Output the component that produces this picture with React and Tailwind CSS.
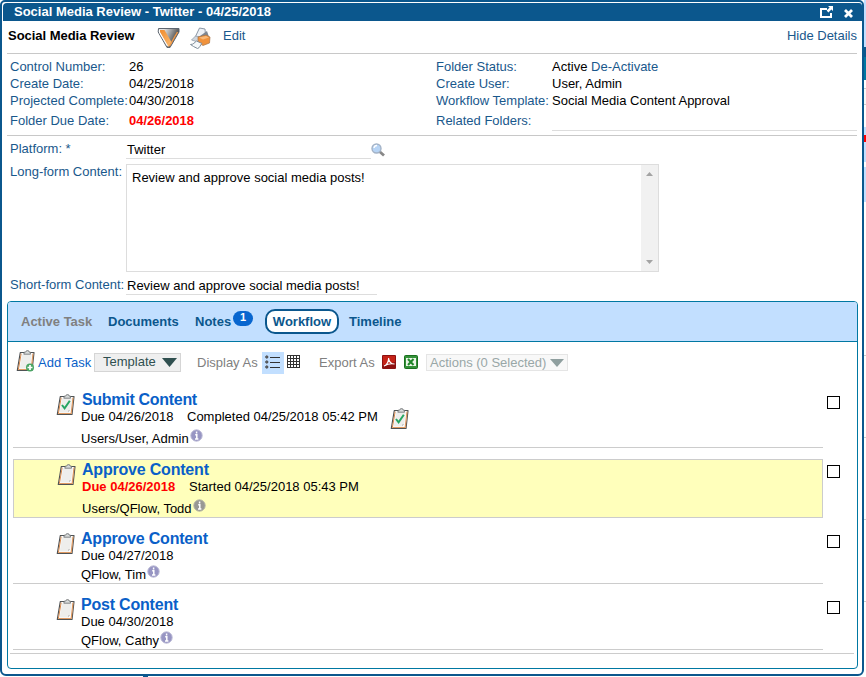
import React from 'react';

const Clipboard = ({ kind, className = '' }) => (
  <svg className={`block shrink-0 ${className}`} width="20" height="22" viewBox="0 0 20 22">
    <path d="M4.300 2.500H18L16 20.500H1.300z" fill="#fff" stroke="#4f5355" strokeWidth="1.200" strokeLinejoin="round" />
    <path d="M5.200 3.600L2.400 19.400" stroke="#d98b4e" strokeWidth="1" />
    <path d="M17 3.600L15.200 19.500H2.200" fill="none" stroke="#e09a62" strokeWidth="1.200" />
    <path d="M6 4.200h9.800l-1.600 12-2.200 2.300H3.700z" fill="#eeeeec" />
    <path d="M14.200 16.200l-2.200 2.300.3-2.300z" fill="#bbb" />
    <path d="M7.800 4.200l.6-2.200h1.500l.6-1.300h2L13 2h1.300l.2 2.200z" fill="#d9dcdc" stroke="#6b6f70" strokeWidth=".8" />
    {kind === 'check' && <path d="M6 11l2.600 3.300 5.200-7.500" fill="none" stroke="#26a562" strokeWidth="2" />}
    {kind === 'add' && (
      <g>
        <circle cx="14" cy="17.500" r="4" fill="#4aa564" />
        <path d="M14 15v5M11.500 17.500h5" stroke="#fff" strokeWidth="1.700" />
      </g>
    )}
  </svg>
);

const Info = ({ gray }) => (
  <svg className="block shrink-0" width="13" height="13" viewBox="0 0 13 13">
    <circle cx="6.500" cy="6.500" r="5.700" fill={gray ? '#989894' : '#9795c3'} stroke={gray ? '#b5b5a5' : '#bcbbd6'} />
    <path d="M6.600 2.500v2M5.200 5.800h1.600v4M5 10h3.400" fill="none" stroke="#fff" strokeWidth="1.500" />
  </svg>
);

const Title = ({ children, className = 'tracking-[-0.2px]' }) => (
  <div className={`h-[17px] text-[16px] leading-[18px] font-bold text-[#0a5fc8] ${className}`}>{children}</div>
);

const Check = () => <div className="size-[13px] shrink-0 border border-black bg-white" />;

const Label = ({ children, className = '' }) => <div className={`shrink-0 text-[#19588c] ${className}`}>{children}</div>;

export default function App() {
  return (
    <div className="flex h-[677px] w-[866px] overflow-hidden bg-white font-['Liberation_Sans',Arial,sans-serif] text-[13px] leading-[17px] whitespace-nowrap text-black">
      <div className="flex w-[864px] shrink-0 flex-col">
        <div className="flex h-[676px] flex-col overflow-hidden rounded-t-[5px] rounded-b-[6px] border-2 border-[#0b578d] bg-white">
          <div className="ml-px mt-px flex h-[18px] shrink-0 rounded-tl-[4px] rounded-tr-[3px] bg-[#0b578d] pl-[11px] text-white">
            <div className="font-bold">Social Media Review - Twitter - 04/25/2018</div>
            <svg className="ml-auto mr-[8px] mt-[2px] block" width="34" height="14" viewBox="0 0 34 14">
              <path d="M7 4H1v8h10V8" fill="none" stroke="#fff" strokeWidth="2" />
              <path d="M8 1h5v5l-1.600-1.600-3 3-1.800-1.800 3-3z" fill="#fff" />
              <path d="M25 5l7 7M32 5l-7 7" stroke="#fff" strokeWidth="2.800" />
            </svg>
          </div>

          <div className="ml-[5px] mr-[5px] flex h-[33px] shrink-0 border-b border-[#c8c8c8] pt-[6px]">
            <div className="w-[150px] pl-px font-bold tracking-[-0.03px]">Social Media Review</div>
            <svg className="block" width="24" height="23" viewBox="0 0 24 23">
              <defs>
                <linearGradient id="tri" x1=".3" y1="0" x2="1" y2=".3">
                  <stop offset="0" stopColor="#e4e4e4" />
                  <stop offset=".4" stopColor="#a8a8a8" />
                  <stop offset="1" stopColor="#444" />
                </linearGradient>
                <linearGradient id="band" x1="0" y1="0" x2="1" y2="1">
                  <stop offset="0" stopColor="#f08c2e" />
                  <stop offset="1" stopColor="#fbbd75" />
                </linearGradient>
              </defs>
              <path d="M1.500 1.500h20.500v3.500L13 20.500h-3L1.200 5z" fill="url(#tri)" stroke="#5e6670" strokeLinejoin="round" />
              <path d="M3 3h4.500l7.500 13-3 3.500h-1L3 5.500z" fill="url(#band)" />
              <path d="M2.500 3v2.200L10.500 19" fill="none" stroke="#fff" strokeWidth="1.100" />
              <path d="M20.500 5L12.500 19" stroke="#f29a48" strokeWidth="1.400" />
            </svg>
            <svg className="ml-[8px] block" width="22" height="23" viewBox="0 0 22 23">
              <path d="M6 10.500L10.500 1l5.500 1 .5 6.500z" fill="#edf1f6" stroke="#8b97a5" />
              <path d="M11 9l7-5 2 6-2 4z" fill="#7e8793" />
              <path d="M2.500 13l4-4 7 1.500-3 5z" fill="#cfd5dc" stroke="#8b97a5" strokeWidth=".7" />
              <path d="M9 10l8-2 4 2-.5 6-6.500 2.500-5-3z" fill="#f0923c" stroke="#a87447" strokeWidth=".7" />
              <path d="M10 10.500l7-1.500 3 1.500-6 2z" fill="#f9b978" />
              <path d="M1.500 17.500c3 0 4-2 6-3.500l5.500 2.500c-2 1.500-2 4.500-4.500 5L4.500 19.500z" fill="#f5f8fa" stroke="#7f8c98" />
            </svg>
            <div className="ml-[12px] text-[#19588c]">Edit</div>
            <div className="ml-auto text-[#19588c]">Hide Details</div>
          </div>

          <div className="ml-[5px] mr-[5px] flex h-[82px] shrink-0 border-b border-[#c8c8c8] pl-[3px] pt-[4px]">
            <div className="w-[426px]">
              {[['Control Number:', '26'], ['Create Date:', '04/25/2018'], ['Projected Complete:', '04/30/2018']].map(([a, b]) => (
                <div key={a} className="flex h-[17px]">
                  <Label className="w-[119px]">{a}</Label>
                  <div>{b}</div>
                </div>
              ))}
              <div className="flex h-[17px] pt-[3px]">
                <Label className="w-[119px]">Folder Due Date:</Label>
                <div className="font-bold text-[#f00]">04/26/2018</div>
              </div>
            </div>
            <div className="flex-1">
              <div className="flex h-[17px]"><Label className="w-[116px]">Folder Status:</Label><div>Active <span className="text-[#19588c]">De-Activate</span></div></div>
              <div className="flex h-[17px]"><Label className="w-[116px]">Create User:</Label><div>User, Admin</div></div>
              <div className="flex h-[17px]"><Label className="w-[116px]">Workflow Template:</Label><div>Social Media Content Approval</div></div>
              <div className="flex h-[22px] pt-[3px]">
                <Label className="w-[116px]">Related Folders:</Label>
                <div className="h-[19px] flex-1 border-b border-[#ddd]" />
              </div>
            </div>
          </div>

          <div className="flex h-[28px] shrink-0 pl-[8px] pt-[4px]">
            <Label className="w-[116px]">Platform: *</Label>
            <div className="h-[19px] w-[245px] border-b border-[#ddd] pl-px pt-px">Twitter</div>
            <svg className="mt-[3px] block" width="15" height="15" viewBox="0 0 15 15">
              <path d="M8.500 8.500l4.500 4" stroke="#888" strokeWidth="2.800" />
              <circle cx="5.500" cy="5.500" r="4.500" fill="#b7d4f5" stroke="#a3b2c6" strokeWidth="1.400" />
              <path d="M3 5a3 3 0 013-2.500" stroke="#fff" strokeWidth="1.300" fill="none" />
            </svg>
          </div>

          <div className="flex h-[108px] shrink-0 pl-[8px]">
            <Label className="-mt-px w-[116px]">Long-form Content:</Label>
            <div className="flex h-[108px] w-[533px] border border-[#ddd]">
              <div className="flex-1 pl-[5px] pt-[4px]">Review and approve social media posts!</div>
              <div className="flex w-[17px] flex-col items-center justify-between bg-[#f1f1f1] pb-[7px] pt-[7px]">
                <svg className="block" width="7" height="4"><path d="M3.500 0L7 4H0z" fill="#a3a3a3" /></svg>
                <svg className="block" width="7" height="4"><path d="M0 0h7L3.500 4z" fill="#a3a3a3" /></svg>
              </div>
            </div>
          </div>

          <div className="flex h-[29px] shrink-0 pl-[8px] pt-[4px]">
            <Label className="w-[116px]">Short-form Content:</Label>
            <div className="h-[19px] w-[251px] border-b border-[#ddd] pl-px pt-px">Review and approve social media posts!</div>
          </div>

          <div className="ml-[5px] mr-[4px] flex h-[368px] shrink-0 flex-col overflow-hidden rounded-[4px] border border-[#0078a2]">
            <div className="flex h-[40px] shrink-0 items-center border-b border-[#0078a2] bg-[#c2dfff] pl-[13px] font-bold text-[#0b578d]">
              <div className="w-[87px] text-[#808080]">Active Task</div>
              <div className="w-[87px]">Documents</div>
              <div className="w-[38px]">Notes</div>
              <div className="mb-[7px] h-[15px] w-5 rounded-full bg-[#0866cf] text-center text-[11px] leading-[13px] text-white">1</div>
              <div className="ml-[12px] flex h-[25px] w-[74px] items-center justify-center rounded-[10px] border-2 border-[#0b578d] bg-white">Workflow</div>
              <div className="ml-[10px]">Timeline</div>
            </div>

            <div className="flex h-[42px] shrink-0 items-center pb-[2px] pl-[8px] text-[#808080]">
              <Clipboard kind="add" className="-mt-[2px]" />
              <div className="ml-[2px] w-[56px] text-[#0a5fc8]">Add Task</div>
              <div className="flex h-[19px] w-[87px] items-center border border-[#d5d5d5] bg-[#efefef] pl-[8px] text-[#2f4f4f]">
                <div className="-mt-[2px]">Template</div>
                <svg className="ml-[6px] mt-px block" width="15" height="9"><path d="M0 0h15L7.500 9z" fill="#2f4f4f" /></svg>
              </div>
              <div className="ml-[16px] w-[65px]">Display As</div>
              <div className="mt-px flex h-[22px] w-[22px] items-center justify-center bg-[#c2dfff]">
                <svg className="-mt-[2px]" width="16" height="14" viewBox="0 0 16 14">
                  <path d="M5 2.500h10M5 7.500h10M5 12.500h10" stroke="#333" />
                  <g fill="#777" stroke="#333" strokeWidth=".7"><circle cx="1.800" cy="2" r="1.200" /><circle cx="1.800" cy="7" r="1.200" /><circle cx="1.800" cy="12" r="1.200" /></g>
                </svg>
              </div>
              <svg className="ml-[3px] block" width="14" height="14" viewBox="0 0 14 14">
                <path d="M.5 0v13M3.500 0v13M6.500 0v13M9.500 0v13M12.500 0v13M0 .5h13M0 3.500h13M0 6.500h13M0 9.500h13M0 12.500h13" stroke="#333" />
              </svg>
              <div className="ml-[18px] w-[63px]">Export As</div>
              <svg className="block" width="14" height="14" viewBox="0 0 14 14">
                <rect width="14" height="14" rx="1" fill="#8c1111" /><path d="M1 1h12v6L1 10z" fill="#c52318" />
                <path d="M2 11c3-1 5-5 4.500-8 .5 4 3 6 6 6-4-.8-7 0-10.500 2z" fill="none" stroke="#fff" strokeWidth="1.200" />
              </svg>
              <svg className="ml-[8px] block" width="14" height="14" viewBox="0 0 14 14">
                <rect x=".5" y=".5" width="13" height="13" rx="1" fill="#35913a" stroke="#19711e" />
                <rect x="2" y="3" width="10" height="8" fill="#edf6e9" /><path d="M4 4l5.500 6M9.500 4L4 10" stroke="#21872a" strokeWidth="2" />
              </svg>
              <div className="ml-[8px] flex h-[17px] w-[142px] items-center border border-[#e5e5e5] bg-[#f8f8f8] pl-[3px] text-[#99a7a7]">
                <div>Actions (0 Selected)</div>
                <svg className="ml-[4px] mt-px block" width="14" height="8"><path d="M0 0h14L7 8z" fill="#8f9f9f" /></svg>
              </div>
            </div>

            <div className="ml-[5px] flex h-[64px] shrink-0">
              <div className="flex w-[810px] border-b border-[#ccc] pl-[43px] pt-[7px]">
                <Clipboard kind="check" className="mt-[3px]" />
                <div className="ml-[5px] w-[106px]">
                  <Title className="pl-px tracking-[-0.3px]">Submit Content</Title>
                  <div className="h-[17px]">Due 04/26/2018</div>
                  <div className="flex h-[21px] pt-[5px]">Users/User, Admin<span className="ml-px -mt-px"><Info /></span></div>
                </div>
                <div className="pt-[17px]">Completed 04/25/2018 05:42 PM</div>
                <Clipboard kind="check" className="ml-[12px] mt-[17px]" />
              </div>
              <div className="ml-[4px] mt-[12px]"><Check /></div>
            </div>

            <div className="ml-[5px] mt-[11px] flex h-[60px] shrink-0">
              <div className="flex h-[59px] w-[810px] border border-[#ccc] bg-[#ffffbb] pl-[43px] pt-px">
                <Clipboard kind="plain" className="mt-[3px]" />
                <div className="ml-[5px] w-[107px]">
                  <Title>Approve Content</Title>
                  <div className="h-[17px] font-bold text-[#f00]">Due 04/26/2018</div>
                  <div className="flex h-[21px] pt-[5px]">Users/QFlow, Todd<span className="ml-px -mt-px"><Info gray /></span></div>
                </div>
                <div className="pt-[17px]">Started 04/25/2018 05:43 PM</div>
              </div>
              <div className="ml-[4px] mt-[6px]"><Check /></div>
            </div>

            {[['Approve Content', '04/27/2018', 'QFlow, Tim'], ['Post Content', '04/30/2018', 'QFlow, Cathy']].map(([t, d, u], i) => (
              <div key={t} className={i ? 'ml-[5px] flex h-[66px] shrink-0' : 'ml-[5px] flex h-[65px] shrink-0'}>
                <div className={i ? 'flex w-[810px] border-b border-[#ccc] pl-[43px] pt-[12px]' : 'flex w-[810px] border-b border-[#ccc] pl-[43px] pt-[11px]'}>
                  <Clipboard kind="plain" className="mt-[3px]" />
                  <div className="ml-[5px]">
                    <Title>{t}</Title>
                    <div className="h-[17px]">Due {d}</div>
                    <div className="flex pt-[2px]">{u}<span className="ml-px -mt-px"><Info /></span></div>
                  </div>
                </div>
                <div className={i ? 'ml-[4px] mt-[17px]' : 'ml-[4px] mt-[16px]'}><Check /></div>
              </div>
            ))}
            <div className="ml-[2px] mr-[3px] mt-[3px] h-px shrink-0 bg-[#ccc]" />
          </div>
        </div>
        <div className="ml-[143px] h-px w-[5px] bg-[#0b578d]" />
      </div>
      <div className="flex w-[2px] flex-col">
        <div className="h-[47px] shrink-0 bg-[#c2dfff]" />
        <div className="h-[10px] shrink-0 bg-[#0b578d]" />
        <div className="h-[23px] shrink-0 bg-[#0078a2]" />
        <div className="h-[8px] shrink-0 bg-white" />
        <div className="h-[17px] shrink-0 border-y border-[#ccc] bg-[#f8f8f8]" />
        <div className="h-[22px] shrink-0 bg-white" />
        <div className="h-[8px] shrink-0 bg-[#c2dfff]" />
        <div className="h-[7px] shrink-0 bg-[#f00]" />
        <div className="h-[20px] shrink-0 bg-[#c2dfff]" />
        <div className="h-[5px] shrink-0 bg-white" />
        <div className="h-[35px] shrink-0 bg-[#c2dfff]" />
        <div className="h-[154px] shrink-0 border-b border-[#ccc]" />
        <div className="h-[82px] shrink-0 border-b border-[#ccc]" />
        <div className="h-[82px] shrink-0 border-b border-[#ccc]" />
        <div className="h-[82px] shrink-0 border-b border-[#ccc]" />
      </div>
    </div>
  );
}
